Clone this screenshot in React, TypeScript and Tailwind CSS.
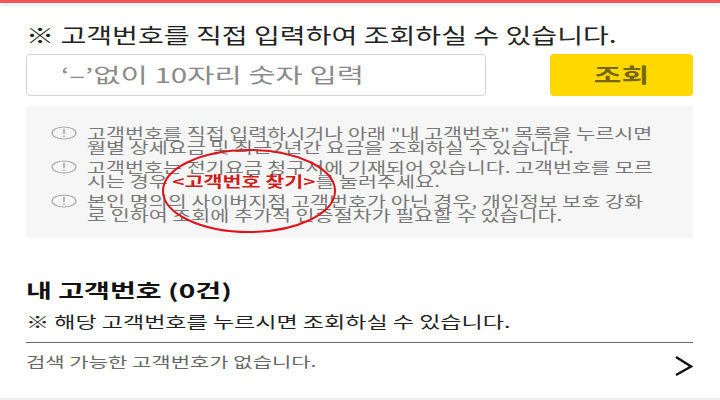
const font = "font-['Noto_Sans_CJK_KR','Noto_Sans',sans-serif]";

const notices = [
  <>
    <p>고객번호를 직접 입력하시거나 아래 "내 고객번호" 목록을 누르시면</p>
    <p>월별 상세요금 및 최근2년간 요금을 조회하실 수 있습니다.</p>
  </>,
  <>
    <p>고객번호는 전기요금 청구서에 기재되어 있습니다. 고객번호를 모르</p>
    <p>
      시는 경우 <b className="font-bold text-[#d01c1c]">&lt;고객번호 찾기&gt;</b>를 눌러주세요.
    </p>
  </>,
  <>
    <p>본인 명의의 사이버지점 고객번호가 아닌 경우, 개인정보 보호 강화</p>
    <p>로 인하여 조회에 추가적 인증절차가 필요할 수 있습니다.</p>
  </>,
];

function AlertIcon() {
  return (
    <svg width="26" height="14" viewBox="0 0 26 14" className="shrink-0">
      <ellipse cx="13" cy="7" rx="12" ry="6" fill="none" stroke="#a8a8a8" strokeWidth="1.2" />
      <path d="M13 2.8v5.2M13 9.5v1.6" stroke="#999" strokeWidth="1.4" fill="none" />
    </svg>
  );
}

export default function App() {
  return (
    <div className={`${font} relative w-[720px] h-[400px] overflow-hidden bg-white text-[#222]`}>
      <div className="h-[3px] bg-[#f0565a] shadow-[0_2px_4px_rgba(0,0,0,0.12)]" />

      <div className="px-[26px] pr-[27px]">
        <h2 className="mt-[19px] h-[24px] text-[21px] leading-[24px] whitespace-nowrap scale-x-[1.338] origin-left">
          ※ 고객번호를 직접 입력하여 조회하실 수 있습니다.
        </h2>

        <div className="mt-[8px] flex justify-between">
          <div className="w-[460px] h-[42px] flex items-center pl-[34px] rounded-[4px] border border-[#d4d4d4] text-[20px] text-[#8a8a8a]">
            <span className="whitespace-nowrap scale-x-[1.48] origin-left">‘–’없이 10자리 숫자 입력</span>
          </div>
          <button className="w-[143px] h-[42px] rounded-[4px] bg-[#ffd800] text-[20px] font-bold text-[#75660f]">
            <span className="inline-block scale-x-[1.5]">조회</span>
          </button>
        </div>

        <div className="mt-[10px] h-[132px] bg-[#f6f6f6] pl-[25px] pt-[20px] text-[14.5px] leading-[14px] text-[#777]">
          <div className="flex flex-col gap-[6px]">
            {notices.map((n, i) => (
              <div key={i} className="flex gap-[10px]">
                <AlertIcon />
                <div className="whitespace-nowrap scale-x-[1.425] origin-left">{n}</div>
              </div>
            ))}
          </div>
        </div>

        <h3 className="mt-[40px] h-[24px] text-[19px] leading-[24px] font-bold text-[#111] whitespace-nowrap scale-x-[1.48] origin-left">
          내 고객번호 (0건)
        </h3>
        <p className="mt-[9px] h-[20px] text-[16px] leading-[20px] text-[#222] whitespace-nowrap scale-x-[1.44] origin-left">
          ※ 해당 고객번호를 누르시면 조회하실 수 있습니다.
        </p>
        <div className="mt-[11px] border-t border-[#666] pt-[9px] flex justify-between">
          <span className="text-[14px] leading-[18px] text-[#666] whitespace-nowrap scale-x-[1.5] origin-left">
            검색 가능한 고객번호가 없습니다.
          </span>
          <svg width="20" height="24" viewBox="0 0 20 24" className="mt-[2px]">
            <path d="M3 3l15 9.5L3 21" fill="none" stroke="#111" strokeWidth="2.4" />
          </svg>
        </div>
      </div>

      <div className="absolute left-0 right-0 bottom-0 h-[2px] bg-[#f0f0f0]" />

      {/* red annotation circle over the notice box */}
      <svg width="176" height="86" viewBox="0 0 176 86" className="absolute left-[161px] top-[148px]">
        <ellipse cx="88" cy="43" rx="86" ry="41" fill="none" stroke="#e0141c" strokeWidth="2" />
      </svg>
    </div>
  );
}
